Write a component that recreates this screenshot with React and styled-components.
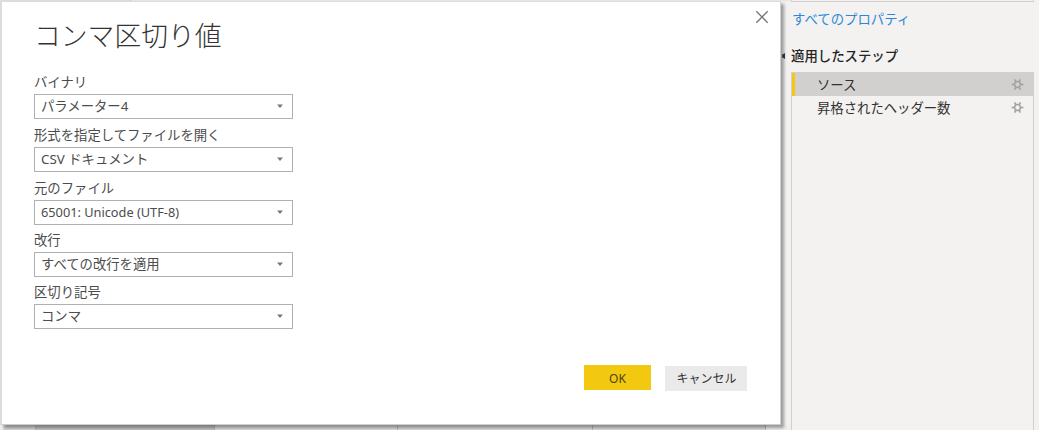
import styled, { createGlobalStyle } from 'styled-components';

const GlobalStyle = createGlobalStyle`
  * {
    box-sizing: border-box;
  }
  body {
    margin: 0;
    overflow: hidden;
    background: #f3f2f1;
    color: #4c4c4c;
    font-family: 'Noto Sans CJK JP', sans-serif;
    font-size: 13.35px;
  }
`;

const Screen = styled.div`
  display: flex;
  width: 1039px;
  height: 430px;
  overflow: hidden;
`;

const Workspace = styled.div`
  display: flex;
  flex-direction: column;
  width: 791px;
  height: 430px;
`;

const TopStrip = styled.div`
  flex: none;
  display: flex;
  height: 1px;
  background: #e8e7e6;
  span {
    width: 131px;
    border-right: 1px solid #c8c8c8;
    background: #dedede;
  }
`;

const DialogRow = styled.div`
  display: flex;
  flex: none;
  height: 424px;
  border-left: 1px solid #dcdcdc;
`;

const Dialog = styled.section`
  position: relative;
  display: flex;
  flex-direction: column;
  width: 780px;
  height: 424px;
  padding: 0 33px 33px 32px;
  background: #fff;
  border: 1px solid #cfcfcf;
  border-left-color: #dcdcdc;
  border-top-color: #dcdcda;
  box-shadow: 3px 3px 3px rgba(0, 0, 0, 0.36);
`;

const CloseButton = styled.button`
  display: flex;
  align-self: flex-end;
  margin: 8px -22px 0 0;
  padding: 0;
  border: 0;
  background: none;
`;

const Title = styled.h1`
  margin: -7px 0 0;
  color: #333;
  font-size: 26.8px;
  font-weight: 300;
  line-height: 36px;
`;

const Form = styled.div`
  display: flex;
  flex-direction: column;
  margin-top: 18px;
`;

const Field = styled.div`
  height: ${({ $height }) => $height}px;
`;

const Label = styled.div`
  height: 23px;
  line-height: 21px;
`;

const Select = styled.div`
  display: flex;
  align-items: center;
  justify-content: space-between;
  width: 259px;
  height: 25px;
  padding: 0 8px 0 6px;
  border: 1px solid #b0b0b0;
  line-height: 21px;
  span {
    font-family: 'Noto Sans', 'Noto Sans CJK JP', sans-serif;
    font-size: ${({ $latin }) => ($latin ? '12.8px' : '13.35px')};
    letter-spacing: ${({ $latin }) => ($latin ? '-0.02px' : '0')};
  }
`;

const Actions = styled.div`
  display: flex;
  align-items: flex-end;
  gap: 14px;
  margin: auto 0 0 auto;
`;

const Button = styled.button`
  width: ${({ $primary }) => ($primary ? 67 : 82)}px;
  height: 25px;
  margin-bottom: ${({ $primary }) => ($primary ? 1 : 0)}px;
  padding: ${({ $primary }) => ($primary ? '1px 0 0' : '0 0 0 1px')};
  border: 0;
  background: ${({ $primary }) => ($primary ? '#f2c811' : '#eaeaea')};
  color: ${({ $primary }) => ($primary ? '#4d430f' : '#333')};
  font-family: 'Noto Sans', 'Noto Sans CJK JP', sans-serif;
  font-size: 12px;
  line-height: 25px;
`;

const TableStrip = styled.div`
  display: flex;
  flex: 1;
  padding-left: 3px;
  background: #efeeed;
`;

const Cell = styled.div`
  width: ${({ $width }) => $width}px;
  background: ${({ $color }) => $color};
  border-right: 1px solid #b9b9b9;
`;

const SidePane = styled.aside`
  display: flex;
  flex-direction: column;
  width: 243px;
`;

const NameInput = styled.div`
  flex: none;
  height: 2px;
  border: 1px solid #d2d0ce;
  border-top: 0;
`;

const PropertiesLink = styled.a`
  margin: 6px 0 0 1px;
  color: #2b88d8;
  font-size: 13.4px;
  line-height: 20px;
`;

const StepsHeader = styled.div`
  display: flex;
  align-items: center;
  height: 20px;
  margin: 17px 0 7px -9px;
  color: #252423;
  font-size: 13.4px;
  font-weight: 500;
`;

const Collapse = styled.span`
  width: 3px;
  height: 6px;
  margin: 2px 6px 0 0;
  background: #333;
  clip-path: polygon(0 30%, 100% 0, 100% 100%, 0 70%);
`;

const Steps = styled.div`
  flex: 1;
  border: 1px solid #d2d0ce;
  border-bottom: 0;
`;

const Step = styled.div`
  display: flex;
  align-items: center;
  justify-content: space-between;
  height: 23px;
  padding: 0 9px 0 22px;
  border-left: 3px solid ${({ $active }) => ($active ? '#f2c811' : 'transparent')};
  background: ${({ $active }) => ($active ? '#d2d0ce' : 'transparent')};
  color: #323130;
  line-height: 22px;
`;

const fields = [
  { label: 'バイナリ', value: 'パラメーター4', height: 53 },
  { label: '形式を指定してファイルを開く', value: 'CSV ドキュメント', height: 53 },
  { label: '元のファイル', value: '65001: Unicode (UTF-8)', height: 52, latin: true },
  { label: '改行', value: 'すべての改行を適用', height: 52 },
  { label: '区切り記号', value: 'コンマ', height: 48 },
];

const steps = ['ソース', '昇格されたヘッダー数'];

const Caret = () => (
  <svg width="8" height="5" viewBox="0 0 8 5">
    <path d="M1 .5h6L4 4z" fill="#777" />
  </svg>
);

const gearTeeth = [0, 60, 120, 180, 240, 300];

const Gear = () => (
  <svg width="13" height="13" viewBox="0 0 13 13" fill="none" stroke="#a5a3a1">
    <circle cx="6.5" cy="6.5" r="2.9" strokeWidth="1.5" />
    {gearTeeth.map((angle) => (
      <path
        key={angle}
        d="M9.4 6.5h3"
        strokeWidth="1.7"
        transform={`rotate(${angle} 6.5 6.5)`}
      />
    ))}
  </svg>
);

export default function App() {
  return (
    <Screen>
      <GlobalStyle />
      <Workspace>
        <TopStrip>
          <span />
        </TopStrip>
        <DialogRow>
          <Dialog>
            <CloseButton aria-label="閉じる">
              <svg width="14" height="14" viewBox="0 0 14 14">
                <path d="M1.3 1.3l11.4 11.4M12.7 1.3L1.3 12.7" stroke="#777" strokeWidth="1.3" />
              </svg>
            </CloseButton>
            <Title>コンマ区切り値</Title>
            <Form>
              {fields.map(({ label, value, height, latin }) => (
                <Field key={label} $height={height}>
                  <Label>{label}</Label>
                  <Select $latin={latin}>
                    <span>{value}</span>
                    <Caret />
                  </Select>
                </Field>
              ))}
            </Form>
            <Actions>
              <Button $primary>OK</Button>
              <Button>キャンセル</Button>
            </Actions>
          </Dialog>
        </DialogRow>
        <TableStrip>
          <Cell $width={33} $color="#d8d7d5" />
          <Cell $width={179} $color="#c3c3c3" />
          <Cell $width={183} $color="#dcdcdc" />
          <Cell $width={195} $color="#dcdcdc" />
          <Cell $width={173} $color="#dcdcdc" />
        </TableStrip>
      </Workspace>
      <SidePane>
        <NameInput />
        <PropertiesLink>すべてのプロパティ</PropertiesLink>
        <StepsHeader>
          <Collapse />
          適用したステップ
        </StepsHeader>
        <Steps>
          {steps.map((step, i) => (
            <Step key={step} $active={i === 0}>
              {step}
              <Gear />
            </Step>
          ))}
        </Steps>
      </SidePane>
    </Screen>
  );
}
